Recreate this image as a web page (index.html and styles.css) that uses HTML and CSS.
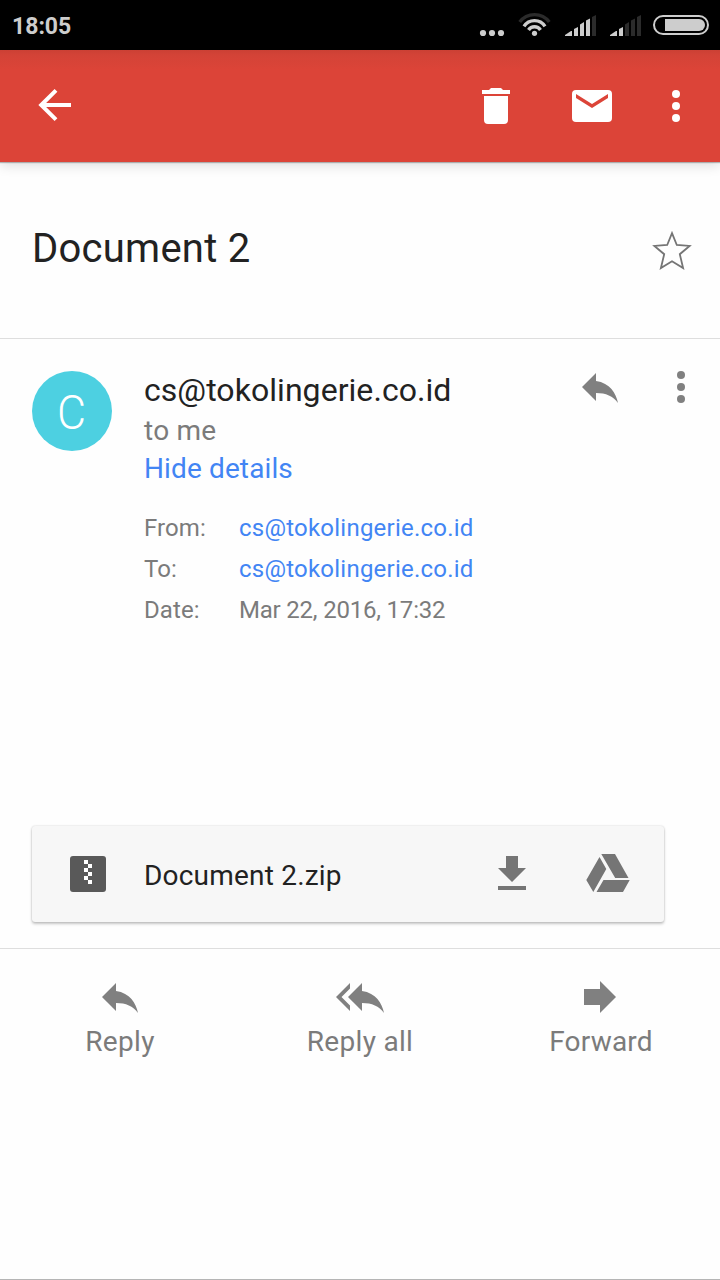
FILE: index.html
```html
<!DOCTYPE html>
<html lang="en">
<head>
<meta charset="utf-8">
<title>Document 2</title>
<link rel="stylesheet" href="styles.css">
</head>
<body>
<div class="screen">
  <div class="status-bar">
    <span class="clock">18:05</span>
    <div class="status-icons">
      <svg width="26" height="50" viewBox="479 0 26 50" fill="#cdcdcd"><circle cx="483" cy="33" r="3.1"/><circle cx="492" cy="33" r="3.1"/><circle cx="501" cy="33" r="3.1"/></svg>
      <svg width="34" height="50" viewBox="518 0 34 50" fill="none" stroke-width="3.4"><path stroke="#2b2b2b" d="M519.700 22A18.500 18.500 0 0 1 549.300 22"/><g stroke="#cdcdcd"><path d="M524 26.300A12.500 12.500 0 0 1 545 26.300"/><path d="M528.500 30A7.200 7.200 0 0 1 540.500 30"/></g><circle cx="534.500" cy="33.300" r="2.600" fill="#cdcdcd"/></svg>
      <svg width="32" height="50" viewBox="565 0 32 50"><path fill="#cdcdcd" d="M565 36v-1l6-4h1v5zM574 36v-7l4-2v9zM580 36V24.500l4-2.500v14zM586 36V20.500l4-2v17.500z"/><path fill="#2b2b2b" d="M592 36V17l4-2v21z"/></svg>
      <svg width="32" height="50" viewBox="610 0 32 50"><path fill="#cdcdcd" d="M610 36v-1l6-4h1v5zM619 36v-7l4-2v9z"/><path fill="#2b2b2b" d="M625 36V24.500l4-2.500v14zM631 36V20.500l4-2v17.500zM637 36V17l4-2v21z"/></svg>
      <svg width="58" height="50" viewBox="652 0 58 50"><rect x="654" y="16" width="54" height="18" rx="9" fill="none" stroke="#cdcdcd" stroke-width="2"/><path fill="#cdcdcd" d="M665 19h34a6 6 0 0 1 0 12h-34z"/></svg>
    </div>
  </div>

  <header class="app-bar">
    <svg width="34" height="34" viewBox="38 88 34 34" fill="none" stroke="#fff" stroke-width="4"><path d="M71 105H41.500M56 90.300L41.200 105L56 119.700"/></svg>
    <div class="app-actions">
      <svg width="28" height="36" viewBox="482 88 28 36" fill="#fff"><path d="M482 90h7l2-2h10l2 2h7v4h-28zM484 96h24v24a4 4 0 0 1-4 4h-16a4 4 0 0 1-4-4z"/></svg>
      <svg width="40" height="32" viewBox="572 90 40 32"><rect x="572" y="90" width="40" height="32" rx="4" fill="#fff"/><path fill="#dc4438" d="M576 94l16 10 16-10v4l-16 10-16-10z"/></svg>
      <svg width="8" height="32" viewBox="672 90 8 32" fill="#fff"><circle cx="676" cy="94" r="4"/><circle cx="676" cy="106" r="4"/><circle cx="676" cy="118" r="4"/></svg>
    </div>
  </header>

  <section class="subject">
    <h1 class="subject-title">Document 2</h1>
    <svg width="40" height="40" viewBox="652 230 40 40" fill="none" stroke="#757575" stroke-width="1.800"><path d="M672 233.200L676.800 245L689.600 245.900L679.800 254.200L683.100 268L672 261.200L660.900 268L664.200 254.200L654.400 245.900L667.200 245Z"/></svg>
  </section>

  <section class="message">
    <div class="avatar"><span class="initial">C</span></div>
    <div class="sender">
      <div class="sender-name">cs@tokolingerie.co.id</div>
      <div class="recipient">to me</div>
      <div class="toggle">Hide details</div>
      <dl class="details">
        <dt class="key">From:</dt><dd class="value link">cs@tokolingerie.co.id</dd>
        <dt class="key">To:</dt><dd class="value link">cs@tokolingerie.co.id</dd>
        <dt class="key">Date:</dt><dd class="value date">Mar 22, 2016, 17:32</dd>
      </dl>
    </div>
    <div class="message-actions">
      <svg width="36" height="30" viewBox="102 983 36 30" fill="#808080"><path d="M116 983v8c14 2 20 12 22 22-5-7-12-10-22-10v8l-14-14z"/></svg>
      <svg width="8" height="32" viewBox="672 90 8 32" fill="#808080"><circle cx="676" cy="94" r="4"/><circle cx="676" cy="106" r="4"/><circle cx="676" cy="118" r="4"/></svg>
    </div>
  </section>

  <section class="attachment">
    <svg width="36" height="36" viewBox="0 0 36 36"><rect width="36" height="36" rx="3" fill="#595959"/><path fill="#fff" d="M14 4h4v4h-4zM18 8h4v4h-4zM14 12h4v4h-4zM18 16h4v4h-4zM14 20h4v4h-4zM18 24h4v4h-4z"/></svg>
    <span class="file-name">Document 2.zip</span>
    <svg width="28" height="36" viewBox="498 856 28 36" fill="#757575"><path d="M506 856h12v12h8l-14 14-14-14h8zM498 886h28v4h-28z"/></svg>
    <svg width="44" height="40" viewBox="586 854 44 40" fill="#757575"><path d="M601.300 854H615L628.500 878H615.200zM599.500 857L606.300 869L593.300 892L586.300 880zM603.500 880H629.700L623 892H596.500z"/></svg>
  </section>

  <nav class="replies">
    <div class="reply-item">
      <svg width="36" height="32" viewBox="102 981 36 32" fill="#808080"><path d="M116 983v8c14 2 20 12 22 22-5-7-12-10-22-10v8l-14-14z"/></svg>
      <span class="reply-label reply-one">Reply</span>
    </div>
    <div class="reply-item">
      <svg width="48" height="32" viewBox="336 981 48 32" fill="#808080"><path d="M362 983v8c14 2 20 12 22 22-5-7-12-10-22-10v8l-14-14zM350 983v5.500l-8.500 8.500 8.500 8.500v5.500l-14-14z"/></svg>
      <span class="reply-label reply-all">Reply all</span>
    </div>
    <div class="reply-item">
      <svg width="34" height="32" viewBox="583 981 34 32" fill="#808080"><path d="M584 989h16v-8l16 16-16 16v-8h-16z"/></svg>
      <span class="reply-label reply-forward">Forward</span>
    </div>
  </nav>
</div>
</body>
</html>
```
FILE: styles.css
```css
* { box-sizing: border-box; margin: 0; padding: 0; }
body { background: #fff; font-family: Roboto, "Noto Sans", sans-serif; }
svg { display: block; flex: none; }
.screen { width: 720px; height: 1280px; display: flex; flex-direction: column; background: #fefefe; border-bottom: 1px solid #b5b5b5; overflow: hidden; white-space: nowrap; }

.status-bar { height: 50px; flex: none; display: flex; justify-content: space-between; background: #000; padding: 0 10px 0 12px; }
.clock { color: #cdcdcd; font-size: 23px; font-weight: 700; line-height: 53px; }
.status-icons { display: flex; }
.status-icons svg:nth-child(2) { margin-left: 13px; }
.status-icons svg:nth-child(3) { margin-left: 13px; }
.status-icons svg:nth-child(4) { margin-left: 13px; }
.status-icons svg:nth-child(5) { margin-left: 10px; }

.app-bar { height: 112px; flex: none; display: flex; justify-content: space-between; align-items: flex-start; padding: 38px 40px 0 38px; background: linear-gradient(#cb4034, #d34337 5px, #dc4438 20px); box-shadow: 0 1px 1px rgba(0,0,0,.25), 0 3px 12px rgba(0,0,0,.14); }
.app-actions { display: flex; align-items: flex-start; }
.app-actions svg:nth-child(2) { margin: 2px 60px 0 62px; }
.app-actions svg:nth-child(3) { margin-top: 2px; }

.subject { height: 177px; flex: none; display: flex; justify-content: space-between; padding: 62px 28px 0 32px; border-bottom: 1px solid #dedede; }
.subject-title { font-size: 40px; line-height: 50px; font-weight: 400; color: #222; letter-spacing: .25px; }
.subject svg { margin-top: 6px; }

.message { height: 486px; flex: none; display: flex; padding: 32px 35px 0 32px; }
.avatar { width: 80px; height: 80px; border-radius: 50%; background: #4dd0e1; color: #fff; font-size: 48px; font-weight: 300; line-height: 84px; text-align: center; }
.initial { display: inline-block; transform: scaleX(.93); }
.sender { margin-left: 32px; flex: 1; }
.sender-name { font-size: 32px; line-height: 38px; color: #222; letter-spacing: .05px; }
.recipient { font-size: 28px; line-height: 38px; margin-top: 3px; color: #7b7b7b; letter-spacing: .25px; }
.toggle { font-size: 28px; line-height: 38px; color: #4285f4; letter-spacing: .12px; }
.details { display: grid; grid-template-columns: 95px auto; grid-auto-rows: 41px; margin-top: 20px; font-size: 24px; line-height: 41px; color: #7b7b7b; }
.key { letter-spacing: .1px; }
.link { color: #4285f4; letter-spacing: .23px; }
.date { letter-spacing: -.2px; }
.message-actions { display: flex; gap: 59px; align-items: flex-start; }
.message-actions svg:first-child { margin-top: 2px; }

.attachment { width: 632px; height: 96px; flex: none; margin: 1px 0 26px 32px; display: flex; align-items: center; padding: 0 34px 0 38px; background: #f7f7f7; border-radius: 3px; box-shadow: 0 0 2px rgba(0,0,0,.18), 0 2px 3px rgba(0,0,0,.22); }
.file-name { flex: 1; margin: 3px 0 0 38px; font-size: 28px; color: #222; letter-spacing: .2px; }
.attachment svg:nth-of-type(3) { margin-left: 60px; }

.replies { flex: none; display: grid; grid-template-columns: repeat(3, 1fr); border-top: 1px solid #dedede; padding-top: 32px; }
.reply-item { display: flex; flex-direction: column; align-items: center; }
.reply-label { font-size: 28px; line-height: 36px; margin-top: 11px; color: #7b7b7b; letter-spacing: .3px; }
.reply-forward { letter-spacing: .2px; padding-left: 2px; }
```
